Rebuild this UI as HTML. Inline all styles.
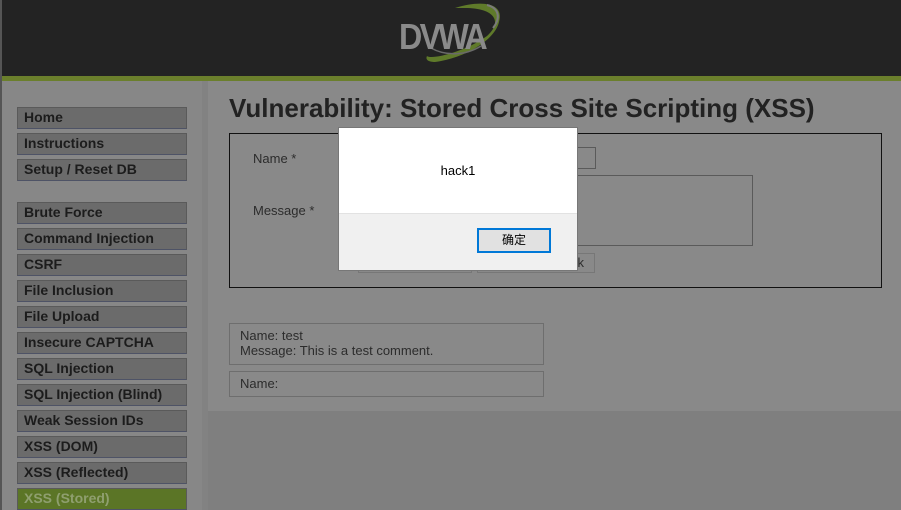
<!DOCTYPE html>
<html><head><meta charset="utf-8"><style>
*{margin:0;padding:0;box-sizing:border-box}
body{width:901px;height:510px;overflow:hidden;background:#7f7f7f;font-family:"Liberation Sans",Arial,sans-serif;position:relative}
.abs{position:absolute}
#hdr{left:2px;top:0;width:899px;height:76px;background:#232323}
#bar{left:2px;top:76px;width:899px;height:5px;background:#6b7f2c}
#lstrip{left:0;top:0;width:2px;height:510px;background:#555}
#menu{left:2px;top:81px;width:200px;height:429px;background:#878787}
#sep{left:202px;top:81px;width:6px;height:429px;background:#828282}
#main{left:208px;top:81px;width:693px;height:330px;background:#898989}
.mi{position:absolute;left:17px;width:170px;height:22px;background:#6b6b6b;border:1px solid #5a5a5a;border-bottom-color:#4e5366;font-weight:bold;font-size:14px;color:#1c1c1c;padding:1px 6px;line-height:16px}
.mi.act{background:#5b7526;color:#8f9f6f}
h1{position:absolute;left:229px;top:93px;font-size:26px;color:#222;font-weight:bold;white-space:nowrap}
#form{left:229px;top:133px;width:653px;height:155px;border:1px solid #111}
.lbl{font-size:13px;color:#2c2c2c}
.inp{border:1px solid #5a5a5a}
.cm{border:1px solid #6e6e6e;font-size:13px;color:#2c2c2c;padding:4px 10px;line-height:15px}
#dlg{left:338px;top:127px;width:240px;height:144px;background:#fff;border:1px solid #777}
#dlgb{left:0;top:85px;width:238px;height:57px;background:#f0f0f0;border-top:1px solid #e2e2e2}
#btn{left:138px;top:14px;width:74px;height:25px;border:2px solid #0078d7;background:#e1e1e1;font-family:"Liberation Sans","Noto Sans CJK SC",sans-serif;font-size:12px;text-align:center;line-height:21px;color:#000}
</style></head><body>
<div class="abs" id="hdr"></div>
<div class="abs" id="bar"></div>
<div class="abs" id="lstrip"></div>
<svg class="abs" style="left:395px;top:0" width="115" height="70" viewBox="0 0 115 70">
<path d="M60 8 C85 0 110 2 104 22 C100 40 70 58 40 62 C34 62 30 60 32 56 C36 60 70 52 92 36 C108 22 100 8 70 8 Z" fill="#5f7a2a"/>
<path d="M92 5 C104 8 106 18 98 28" fill="none" stroke="#7a7a7a" stroke-width="2"/>
<path d="M36 48 C50 56 70 56 86 46" fill="none" stroke="#6a6a6a" stroke-width="1.5"/>
<text x="4" y="49" font-family="Liberation Sans" font-weight="bold" font-size="36" fill="#8a8a8a" letter-spacing="-3" textLength="86" lengthAdjust="spacingAndGlyphs">DVWA</text>
</svg>
<div class="abs" id="menu"></div>
<div class="abs" id="sep"></div>
<div class="abs" id="main"></div>
<div class="mi" style="top:107px">Home</div>
<div class="mi" style="top:133px">Instructions</div>
<div class="mi" style="top:159px">Setup / Reset DB</div>
<div class="mi" style="top:202px">Brute Force</div>
<div class="mi" style="top:228px">Command Injection</div>
<div class="mi" style="top:254px">CSRF</div>
<div class="mi" style="top:280px">File Inclusion</div>
<div class="mi" style="top:306px">File Upload</div>
<div class="mi" style="top:332px">Insecure CAPTCHA</div>
<div class="mi" style="top:358px">SQL Injection</div>
<div class="mi" style="top:384px">SQL Injection (Blind)</div>
<div class="mi" style="top:410px">Weak Session IDs</div>
<div class="mi" style="top:436px">XSS (DOM)</div>
<div class="mi" style="top:462px">XSS (Reflected)</div>
<div class="mi act" style="top:488px">XSS (Stored)</div>
<h1>Vulnerability: Stored Cross Site Scripting (XSS)</h1>
<div class="abs" id="form"></div>
<div class="abs lbl" style="left:253px;top:151px">Name *</div>
<div class="abs lbl" style="left:253px;top:203px">Message *</div>
<div class="abs inp" style="left:358px;top:147px;width:238px;height:22px"></div>
<div class="abs inp" style="left:358px;top:175px;width:395px;height:71px"></div>
<div class="abs inp" style="left:358px;top:253px;width:114px;height:20px;border-color:#777"></div>
<div class="abs inp" style="left:477px;top:253px;width:118px;height:20px;border-color:#777;font-size:13px;color:#2c2c2c;text-align:right;padding-right:10px;line-height:18px">k</div>
<div class="abs cm" style="left:229px;top:323px;width:315px;height:42px">Name: test<br>Message: This is a test comment.</div>
<div class="abs cm" style="left:229px;top:371px;width:315px;height:26px">Name:</div>
<div class="abs" id="dlg">
<div class="abs" style="left:0;top:35px;width:238px;text-align:center;font-size:13px;color:#000">hack1</div>
<div class="abs" id="dlgb"><div class="abs" id="btn">确定</div></div>
</div>
</body></html>
